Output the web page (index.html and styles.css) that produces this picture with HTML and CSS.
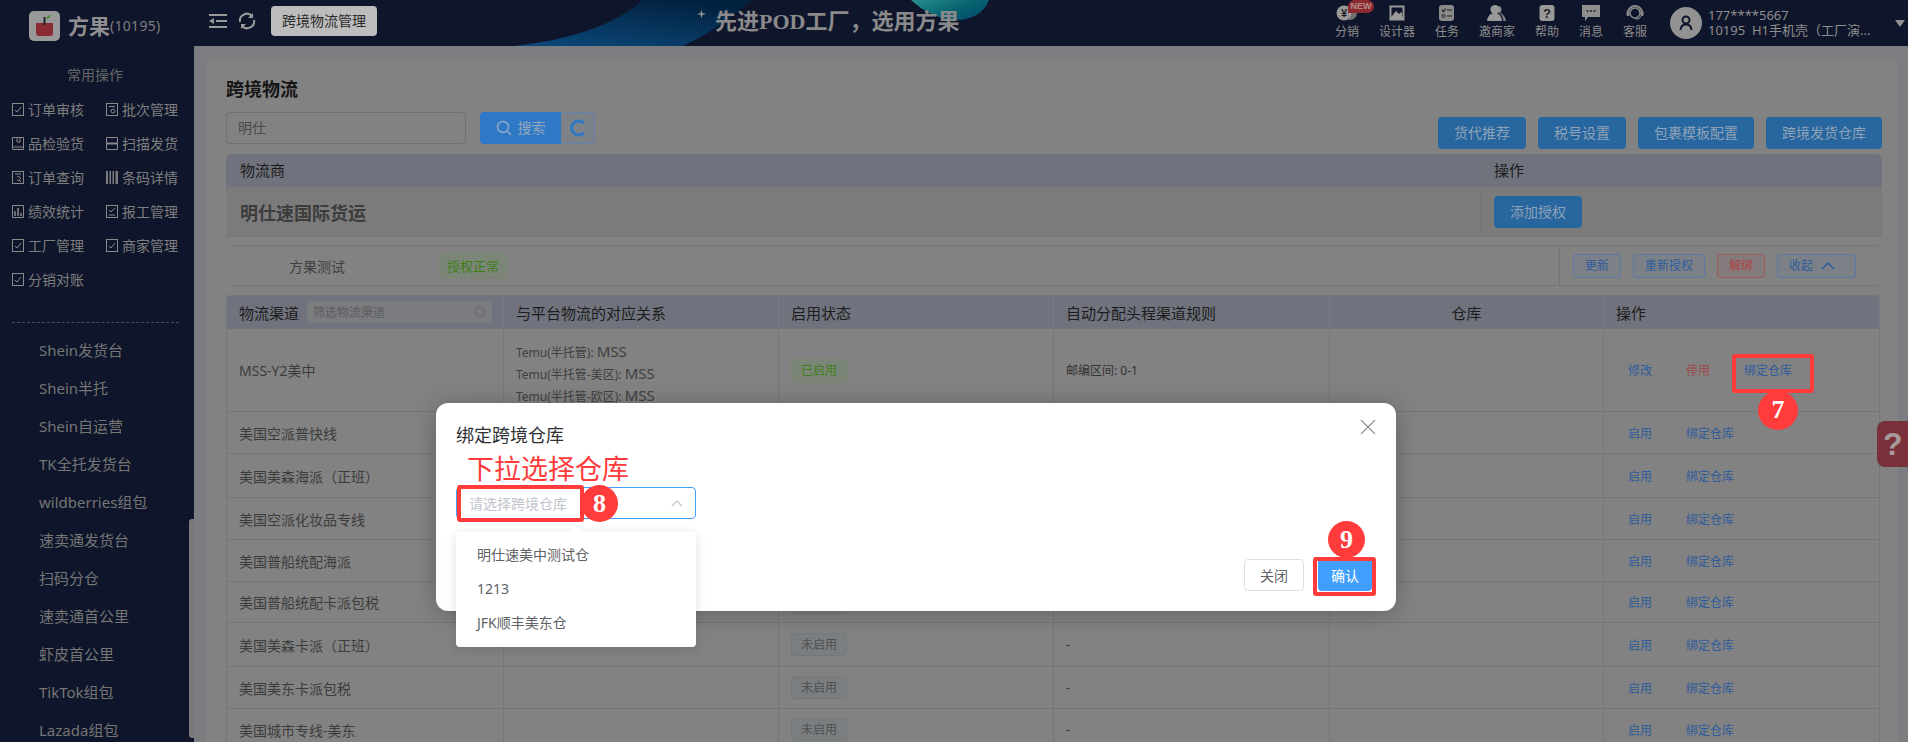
FILE: index.html
```html
<!DOCTYPE html>
<html lang="zh-CN">
<head>
  <meta charset="UTF-8" />
  <title>跨境物流</title>
  <meta name="viewport" content="width=device-width, initial-scale=1.0" />
  <link rel="stylesheet" href="styles.css">
</head>
<body>
  <header class="topbar">
    <svg class="banner" viewBox="0 0 500 46" aria-hidden="true">
      <defs>
        <linearGradient id="wave" x1="0" y1="1" x2="0.7" y2="0">
          <stop offset="0" stop-color="#0b4a7c" />
          <stop offset="1" stop-color="#02213f" />
        </linearGradient>
        <linearGradient id="blob" x1="0" y1="0" x2="1" y2="0.6">
          <stop offset="0" stop-color="#2a8d8f" />
          <stop offset="0.6" stop-color="#07656f" />
          <stop offset="1" stop-color="#03506f" />
        </linearGradient>
      </defs>
      <path d="M14 46 C70 40 118 24 142 0 L252 0 C226 22 205 36 183 46 Z" fill="url(#wave)" />
      <path d="M411 0 L489 0 C484 14 470 20 457 20 C440 20 424 12 411 0 Z" fill="url(#blob)" />
    </svg>
    <svg class="star" viewBox="0 0 10 10" aria-hidden="true"><path d="M5 0 L6 4 L10 5 L6 6 L5 10 L4 6 L0 5 L4 4 Z" fill="#8f8f8f" /></svg>
    <div class="slogan">先进POD工厂&#xFF0C;选用方果</div>

    <div class="brand">
      <svg class="brand-logo" viewBox="0 0 31 30" aria-hidden="true">
        <rect width="31" height="30" rx="5" fill="#999" />
        <path d="M7 12 H24 V22 Q24 25 21 25 H10 Q7 25 7 22 Z" fill="#8a2b33" />
        <rect x="14.5" y="6" width="2" height="8" fill="#222" />
        <path d="M17 8 Q18 4 22 4 Q21 8 17 8 Z" fill="#4d8a3a" />
      </svg>
      <span class="brand-name">方果</span><span class="brand-id">(10195)</span>
    </div>
    <svg class="tool-ic" viewBox="0 0 18 16" aria-hidden="true">
      <path d="M0 1 H18 V3 H0 Z M7 7 H18 V9 H7 Z M0 13 H18 V15 H0 Z M0 8 L5 5 V11 Z" fill="#9a9a9a" />
    </svg>
    <svg class="tool-ic refresh" viewBox="0 0 18 18" aria-hidden="true">
      <path d="M2 10 A7 7 0 0 1 14 4 M16 8 A7 7 0 0 1 4 14" fill="none" stroke="#9a9a9a" stroke-width="2" />
      <path d="M15 1 V6 H10 Z M3 17 V12 H8 Z" fill="#9a9a9a" />
    </svg>
    <span class="crumb">跨境物流管理</span>

    <nav class="top-nav">
      <a class="top-item">
        <svg viewBox="0 0 24 16" aria-hidden="true">
          <circle cx="15" cy="8" r="7" fill="#6f6f6f" />
          <circle cx="9" cy="8" r="7.5" fill="#999" />
          <text x="9" y="12" class="yen">¥</text>
        </svg>
        <span>分销</span>
        <b class="badge">NEW</b>
      </a>
      <a class="top-item">
        <svg viewBox="0 0 16 16" aria-hidden="true">
          <rect x="0.5" y="0.5" width="15" height="15" fill="#999" />
          <rect x="2.5" y="2.5" width="11" height="9" fill="#0f152b" />
          <path d="M3 11 L7 6 L10 9 L12 7 L13 8.5 V13 H3 Z" fill="#999" />
        </svg>
        <span>设计器</span>
      </a>
      <a class="top-item">
        <svg viewBox="0 0 16 16" aria-hidden="true">
          <rect width="15" height="16" rx="3" fill="#8a8a8a" />
          <path d="M3 5 L4.500 6.500 L6.500 3.500 M8 5 H13 M8 11 H13" fill="none" stroke="#222" stroke-width="1.200" />
          <circle cx="4.500" cy="11" r="1.500" fill="none" stroke="#222" />
        </svg>
        <span>任务</span>
      </a>
      <a class="top-item">
        <svg viewBox="0 0 20 16" aria-hidden="true">
          <circle cx="8" cy="4.500" r="4.500" fill="#999" />
          <path d="M0 16 Q1 8 8 8 Q14 8 15 16 Z" fill="#999" />
          <path d="M12 0.500 A4.500 4.500 0 0 1 13 8 Q18 10 19 16 H16.500 Q16 10 12 8 Z" fill="#8a8a8a" />
        </svg>
        <span>邀商家</span>
      </a>
      <a class="top-item">
        <svg viewBox="0 0 16 16" aria-hidden="true">
          <rect x="0.500" width="15" height="16" rx="3" fill="#999" />
          <text x="8" y="13" class="qmark">?</text>
        </svg>
        <span>帮助</span>
      </a>
      <a class="top-item">
        <svg viewBox="0 0 18 16" aria-hidden="true">
          <path d="M0 0 H18 V12 H6 L3 16 V12 H0 Z" fill="#8f8f8f" />
          <circle cx="5.500" cy="6" r="1" fill="#222" />
          <circle cx="9" cy="6" r="1" fill="#222" />
          <circle cx="12.500" cy="6" r="1" fill="#222" />
        </svg>
        <span>消息</span>
      </a>
      <a class="top-item">
        <svg viewBox="0 0 18 16" aria-hidden="true">
          <path d="M2 8 A7 7 0 0 1 16 8" fill="none" stroke="#8a8a8a" stroke-width="2" />
          <circle cx="9" cy="8" r="5" fill="none" stroke="#8a8a8a" stroke-width="1.500" />
          <rect x="0.500" y="6" width="3" height="5" rx="1" fill="#8a8a8a" />
          <rect x="14.500" y="6" width="3" height="5" rx="1" fill="#8a8a8a" />
          <path d="M9 14 H13 L15 11" fill="none" stroke="#8a8a8a" />
        </svg>
        <span>客服</span>
      </a>
    </nav>
    <div class="avatar">
      <svg viewBox="0 0 14 16" aria-hidden="true">
        <circle cx="7" cy="5" r="3.500" fill="none" stroke="#0f152b" stroke-width="2" />
        <path d="M1.500 15 Q2 9.500 7 9.500 Q12 9.500 12.500 15" fill="none" stroke="#0f152b" stroke-width="2" />
      </svg>
    </div>
    <div class="account">
      <div>177****5667</div>
      <div>10195&nbsp; H1手机壳&#xFF08;工厂演...</div>
    </div>
    <i class="caret"></i>
  </header>

  <div class="layout">
    <aside class="sidebar">
      <div class="side-title">常用操作</div>
      <ul class="quick-ops">
        <li><svg viewBox="0 0 12 13"><rect x="0.500" y="0.500" width="11" height="12" fill="none" stroke="#8a8a8a" /><path d="M3 7 L5 9 L9 4" fill="none" stroke="#8a8a8a" /></svg>订单审核</li>
        <li><svg viewBox="0 0 12 13"><rect x="0.500" y="0.500" width="11" height="12" fill="none" stroke="#8a8a8a" /><path d="M3 3.500 H9" stroke="#8a8a8a" /><circle cx="7" cy="8" r="2" fill="none" stroke="#8a8a8a" /></svg>批次管理</li>
        <li><svg viewBox="0 0 12 13"><path d="M0.500 12.500 V0.500 H11.500 V12.500 Z M0.500 10 H11.500" fill="none" stroke="#8a8a8a" /><path d="M5 1 V5 H8 V1" fill="none" stroke="#8a8a8a" /></svg>品检验货</li>
        <li><svg viewBox="0 0 12 13"><path d="M0.500 0.500 H11.500 V12.500 H0.500 Z" fill="none" stroke="#8a8a8a" /><path d="M0 6.500 H12" stroke="#8a8a8a" stroke-width="2" /></svg>扫描发货</li>
        <li><svg viewBox="0 0 12 13"><rect x="0.500" y="0.500" width="11" height="12" fill="none" stroke="#8a8a8a" /><path d="M3 3 H9 M5 6 A2 2 0 1 1 5 9 M7 9 L9 11" fill="none" stroke="#8a8a8a" /></svg>订单查询</li>
        <li><svg viewBox="0 0 12 13"><path d="M0 0 H2 V13 H0 Z M3.500 0 H5 V13 H3.500 Z M6.500 0 H8 V13 H6.500 Z M9.500 0 H12 V13 H9.500 Z" fill="#7c7c7c" /></svg>条码详情</li>
        <li><svg viewBox="0 0 12 13"><path d="M0.500 0.500 H11.500 V12.500 H0.500 Z" fill="none" stroke="#8a8a8a" /><path d="M3 6 V11 M6 3 V11 M9 8 V11" stroke="#8a8a8a" stroke-width="1.500" /></svg>绩效统计</li>
        <li><svg viewBox="0 0 12 13"><rect x="0.500" y="0.500" width="11" height="12" fill="none" stroke="#8a8a8a" /><path d="M3 5 L5 7 L9 3 M3 10 H9" fill="none" stroke="#8a8a8a" /></svg>报工管理</li>
        <li><svg viewBox="0 0 12 13"><rect x="0.500" y="0.500" width="11" height="12" fill="none" stroke="#8a8a8a" /><path d="M3 7 L5 9 L9 4" fill="none" stroke="#8a8a8a" /></svg>工厂管理</li>
        <li><svg viewBox="0 0 12 13"><rect x="0.500" y="0.500" width="11" height="12" fill="none" stroke="#8a8a8a" /><path d="M3 7 L5 9 L9 4" fill="none" stroke="#8a8a8a" /></svg>商家管理</li>
        <li><svg viewBox="0 0 12 13"><rect x="0.500" y="0.500" width="11" height="12" fill="none" stroke="#8a8a8a" /><path d="M3 7 L5 9 L9 4" fill="none" stroke="#8a8a8a" /></svg>分销对账</li>
      </ul>
      <div class="side-line"></div>
      <ul class="side-nav">
        <li>Shein发货台</li>
        <li>Shein半托</li>
        <li>Shein自运营</li>
        <li>TK全托发货台</li>
        <li>wildberries组包</li>
        <li>速卖通发货台</li>
        <li>扫码分仓</li>
        <li>速卖通首公里</li>
        <li>虾皮首公里</li>
        <li>TikTok组包</li>
        <li>Lazada组包</li>
      </ul>
      <div class="side-scroll"></div>
    </aside>

    <main class="main">
      <section class="card">
        <h1 class="page-title">跨境物流</h1>
        <div class="toolbar">
          <div class="search">
            <div class="search-input">明仕</div>
            <button class="btn btn-search">
              <svg viewBox="0 0 16 16" aria-hidden="true"><circle cx="7" cy="7" r="5.500" fill="none" stroke="#8fa9c4" stroke-width="1.500" /><path d="M11 11 L15 15" stroke="#8fa9c4" stroke-width="1.500" /></svg>
              搜索
            </button>
            <button class="btn-reload">
              <svg viewBox="0 0 16 18" aria-hidden="true"><path d="M14 4.500 A7 7 0 1 0 14 13.500" fill="none" stroke="#2f78c5" stroke-width="3" /></svg>
            </button>
          </div>
          <div class="top-actions">
            <button class="btn">货代推荐</button>
            <button class="btn">税号设置</button>
            <button class="btn">包裹模板配置</button>
            <button class="btn">跨境发货仓库</button>
          </div>
        </div>

        <div class="vendor-table">
          <div class="vendor-head">
            <div class="vendor-col">物流商</div>
            <div class="vendor-op">操作</div>
          </div>
          <div class="vendor-row">
            <div class="vendor-col vendor-name">明仕速国际货运</div>
            <div class="vendor-op"><button class="btn">添加授权</button></div>
          </div>
        </div>

        <div class="auth-row">
          <div class="auth-name">方果测试</div>
          <span class="tag tag-green">授权正常</span>
          <div class="auth-actions">
            <button class="btn-line">更新</button>
            <button class="btn-line">重新授权</button>
            <button class="btn-line btn-danger">解绑</button>
            <button class="btn-line btn-fold">收起
              <svg viewBox="0 0 14 8" aria-hidden="true"><path d="M1 7 L7 1 L13 7" fill="none" stroke="#2f5c9c" stroke-width="1.500" /></svg>
            </button>
          </div>
        </div>

        <div class="channel-table">
          <div class="ch-row ch-head">
            <div class="ch-filter-cell">物流渠道
              <div class="ch-filter">筛选物流渠道
                <svg viewBox="0 0 12 12" aria-hidden="true"><circle cx="5.500" cy="5.500" r="4.500" fill="none" stroke="#666" /><path d="M9 9 L11 11" stroke="#666" /></svg>
              </div>
            </div>
            <div>与平台物流的对应关系</div>
            <div>启用状态</div>
            <div>自动分配头程渠道规则</div>
            <div class="ch-center">仓库</div>
            <div>操作</div>
          </div>

          <div class="ch-row ch-first">
            <div>MSS-Y2美中</div>
            <div class="ch-map">
              <p>Temu(半托管): <em>MSS</em></p>
              <p>Temu(半托管-美区): <em>MSS</em></p>
              <p>Temu(半托管-欧区): <em>MSS</em></p>
            </div>
            <div><span class="tag tag-green">已启用</span></div>
            <div class="ch-rule">邮编区间: 0-1</div>
            <div></div>
            <div class="ch-ops"><a>修改</a><a class="link-red">停用</a><a>绑定仓库</a></div>
          </div>
          <div class="ch-row">
            <div>美国空派普快线</div><div></div><div><span class="tag">未启用</span></div><div class="ch-rule">-</div><div></div>
            <div class="ch-ops"><a>启用</a><a>绑定仓库</a></div>
          </div>
          <div class="ch-row ch-tall">
            <div>美国美森海派&#xFF08;正班&#xFF09;</div><div></div><div><span class="tag">未启用</span></div><div class="ch-rule">-</div><div></div>
            <div class="ch-ops"><a>启用</a><a>绑定仓库</a></div>
          </div>
          <div class="ch-row">
            <div>美国空派化妆品专线</div><div></div><div><span class="tag">未启用</span></div><div class="ch-rule">-</div><div></div>
            <div class="ch-ops"><a>启用</a><a>绑定仓库</a></div>
          </div>
          <div class="ch-row">
            <div>美国普船统配海派</div><div></div><div><span class="tag">未启用</span></div><div class="ch-rule">-</div><div></div>
            <div class="ch-ops"><a>启用</a><a>绑定仓库</a></div>
          </div>
          <div class="ch-row ch-short">
            <div>美国普船统配卡派包税</div><div></div><div><span class="tag">未启用</span></div><div class="ch-rule">-</div><div></div>
            <div class="ch-ops"><a>启用</a><a>绑定仓库</a></div>
          </div>
          <div class="ch-row ch-tall">
            <div>美国美森卡派&#xFF08;正班&#xFF09;</div><div></div><div><span class="tag">未启用</span></div><div class="ch-rule">-</div><div></div>
            <div class="ch-ops"><a>启用</a><a>绑定仓库</a></div>
          </div>
          <div class="ch-row">
            <div>美国美东卡派包税</div><div></div><div><span class="tag">未启用</span></div><div class="ch-rule">-</div><div></div>
            <div class="ch-ops"><a>启用</a><a>绑定仓库</a></div>
          </div>
          <div class="ch-row">
            <div>美国城市专线-美东</div><div></div><div><span class="tag">未启用</span></div><div class="ch-rule">-</div><div></div>
            <div class="ch-ops"><a>启用</a><a>绑定仓库</a></div>
          </div>
        </div>
      </section>
    </main>
  </div>

  <div class="help-float">?</div>

  <div class="dialog">
    <div class="dialog-head">
      <span>绑定跨境仓库</span>
      <svg class="dialog-close" viewBox="0 0 16 16" aria-hidden="true"><path d="M1 1 L15 15 M15 1 L1 15" stroke="#909399" stroke-width="1.200" /></svg>
    </div>
    <div class="select">
      <span>请选择跨境仓库</span>
      <svg viewBox="0 0 12 7" aria-hidden="true"><path d="M1 6 L6 1 L11 6" fill="none" stroke="#c0c4cc" stroke-width="1.200" /></svg>
    </div>
    <div class="dialog-foot">
      <button class="btn-plain">关闭</button>
      <button class="btn-primary">确认</button>
    </div>
    <ul class="dropdown">
      <li>明仕速美中测试仓</li>
      <li>1213</li>
      <li>JFK顺丰美东仓</li>
    </ul>
  </div>

  <!-- tutorial marks drawn over the screenshot -->
  <div class="note-text">下拉选择仓库</div>
  <div class="mark mark-bind"></div>
  <div class="num num-7">7</div>
  <div class="mark mark-select"></div>
  <div class="num num-8">8</div>
  <div class="mark mark-ok"></div>
  <div class="num num-9">9</div>
</body>
</html>
```

FILE: styles.css
```css
* {
  box-sizing: border-box;
}

html, body {
  margin: 0;
  height: 742px;
  overflow: hidden;
}

body {
  background-color: #0f152b;
  color: #3a3a3a;
  font-family: "Noto Sans", "Noto Sans CJK SC", sans-serif;
  font-size: 14px;
  position: relative;
}

ul {
  list-style: none;
  margin: 0;
  padding: 0;
}

button {
  font-family: inherit;
  cursor: pointer;
}

/* top bar */
.topbar {
  height: 46px;
  background-color: #0f152b;
  display: flex;
  align-items: center;
  position: relative;
  color: #999;
}

.banner {
  position: absolute;
  left: 500px;
  top: 0;
  width: 500px;
  height: 46px;
}

.star {
  position: absolute;
  left: 697px;
  top: 9px;
  width: 9px;
  height: 10px;
}

.slogan {
  position: absolute;
  left: 715px;
  top: 7px;
  font-family: "Liberation Serif", "Noto Sans CJK SC", serif;
  font-size: 22px;
  line-height: 30px;
  font-weight: 700;
  color: #8a8a8a;
}

.brand {
  width: 209px;
  padding-left: 29px;
  margin-top: 6px;
  display: flex;
  align-items: center;
  position: relative;
}

.brand-logo {
  width: 31px;
  height: 30px;
  margin-right: 8px;
}

.brand-name {
  font-size: 21px;
  font-weight: 700;
  color: #8f8f8f;
  line-height: 30px;
}

.brand-id {
  font-size: 14px;
  color: #7f7f7f;
  line-height: 30px;
  letter-spacing: 0.3px;
}

.tool-ic {
  width: 18px;
  height: 16px;
  margin-top: -4px;
  position: relative;
}

.refresh {
  margin-left: 11px;
  height: 18px;
}

.crumb {
  margin-left: 15px;
  margin-top: -4px;
  height: 30px;
  width: 106px;
  background-color: #bcbcbc;
  color: #2a2a2a;
  border-radius: 4px;
  font-size: 14px;
  line-height: 30px;
  text-align: center;
  position: relative;
}

.top-nav {
  margin-left: auto;
  margin-top: -2px;
  display: flex;
  gap: 20px;
  position: relative;
}

.top-item {
  display: flex;
  flex-direction: column;
  align-items: center;
  position: relative;
  font-size: 12px;
  line-height: 14px;
  color: #8c8c8c;
}

.top-item svg {
  height: 16px;
  margin-bottom: 4px;
  width: 24px;
}

.yen {
  font-family: "Liberation Sans", sans-serif;
  font-size: 11px;
  font-weight: 700;
  text-anchor: middle;
  fill: #222;
}

.qmark {
  font-family: "Liberation Sans", sans-serif;
  font-size: 13px;
  font-weight: 700;
  text-anchor: middle;
  fill: #222;
}

.badge {
  position: absolute;
  left: 13px;
  top: -5px;
  width: 26px;
  height: 13px;
  border-radius: 7px 7px 7px 0;
  background-color: #8d2a30;
  color: #b58a8c;
  font-family: "Liberation Sans", sans-serif;
  font-size: 9px;
  line-height: 13px;
  text-align: center;
}

.avatar {
  margin-left: 23px;
  width: 32px;
  height: 32px;
  border-radius: 50%;
  background-color: #929292;
  display: flex;
  align-items: center;
  justify-content: center;
  position: relative;
}

.avatar svg {
  width: 14px;
  height: 16px;
}

.account {
  margin-left: 6px;
  width: 170px;
  font-size: 13px;
  line-height: 15px;
  color: #8f8f8f;
  white-space: nowrap;
  position: relative;
}

.caret {
  margin-left: 17px;
  margin-right: 3px;
  width: 0;
  height: 0;
  border-left: 5px solid transparent;
  border-right: 5px solid transparent;
  border-top: 7px solid #8f8f8f;
  position: relative;
}

/* page body */
.layout {
  display: flex;
  height: 696px;
}

.sidebar {
  width: 194px;
  flex: none;
  background-color: #0f152b;
  color: #7e7e7e;
  position: relative;
  overflow: hidden;
}

.side-title {
  margin-top: 19px;
  text-align: center;
  line-height: 20px;
  padding-right: 4px;
  color: #666;
  font-size: 14px;
}

.quick-ops {
  margin-top: 7px;
  padding-left: 12px;
  display: grid;
  grid-template-columns: repeat(2, 94px);
  grid-auto-rows: 34px;
}

.quick-ops li {
  display: flex;
  align-items: center;
  gap: 4px;
  white-space: nowrap;
}

.quick-ops svg {
  width: 12px;
  height: 13px;
  flex: none;
}

.side-line {
  margin: 26px 15px 0 12px;
  border-top: 1px dashed #4a4d5a;
}

.side-nav {
  margin-top: 8px;
  padding-left: 39px;
}

.side-nav li {
  height: 38px;
  line-height: 38px;
  font-size: 15px;
  color: #757575;
  white-space: nowrap;
}

.side-scroll {
  position: absolute;
  right: 0;
  top: 473px;
  width: 5px;
  height: 219px;
  border-radius: 3px 0 0 3px;
  background-color: #7a7a7a;
}

.main {
  flex: 1;
  min-width: 0;
  background-color: #7b7d80;
  padding: 13px 10px 0 12px;
}

.card {
  height: 700px;
  background-color: #828282;
  border-radius: 10px 10px 0 0;
  padding: 18px 16px 0 20px;
}

.page-title {
  margin: 0 0 11px;
  font-size: 18px;
  line-height: 24px;
  font-weight: 700;
  color: #141414;
}

.toolbar {
  display: flex;
  justify-content: space-between;
  height: 37px;
}

.search {
  display: flex;
  height: 32px;
}

.search-input {
  width: 240px;
  height: 32px;
  border: 1px solid #707070;
  border-radius: 4px;
  padding-left: 11px;
  line-height: 30px;
  color: #4a4a4a;
  margin-right: 14px;
}

.btn {
  height: 32px;
  padding: 0 16px;
  background-color: #28669f;
  color: #8fa3b8;
  border: none;
  border-radius: 4px;
  font-size: 14px;
  line-height: 32px;
  white-space: nowrap;
}

.btn-search {
  width: 81px;
  padding: 0;
  background-color: #2f78c5;
  border-radius: 4px 0 0 4px;
  display: flex;
  align-items: center;
  justify-content: center;
  gap: 6px;
  color: #93a7bd;
}

.btn-search svg {
  width: 16px;
  height: 16px;
}

.btn-reload {
  width: 34px;
  height: 32px;
  padding: 0;
  background-color: #7d8288;
  border: 1px solid #5f83ab;
  border-left: none;
  border-radius: 0 4px 4px 0;
  display: flex;
  align-items: center;
  justify-content: center;
}

.btn-reload svg {
  width: 16px;
  height: 18px;
}

.top-actions {
  display: flex;
  gap: 12px;
  margin-top: 5px;
}

.vendor-table {
  margin-top: 5px;
  border-radius: 6px 6px 0 0;
  overflow: hidden;
}

.vendor-head,
.vendor-row {
  display: flex;
}

.vendor-head {
  height: 33px;
  background-color: #70737d;
  color: #1c1c1c;
  font-size: 15px;
  line-height: 33px;
}

.vendor-row {
  height: 50px;
  background-color: #7b7b7b;
  border-bottom: 1px solid #777;
  align-items: center;
}

.vendor-col {
  width: 1254px;
  padding-left: 14px;
}

.vendor-op {
  flex: 1;
  padding-left: 13px;
  border-left: 1px solid #757575;
  height: 100%;
  display: flex;
  align-items: center;
}

.vendor-name {
  font-size: 18px;
  font-weight: 700;
  color: #3c3c3c;
}

.auth-row {
  margin: 8px 0 0 4px;
  height: 41px;
  border-top: 1px solid #757575;
  border-bottom: 1px solid #757575;
  display: flex;
  align-items: center;
  width: 1648px;
}

.auth-name {
  margin-left: 59px;
  width: 150px;
  color: #3f3f3f;
}

.tag {
  display: inline-block;
  width: 56px;
  height: 23px;
  line-height: 21px;
  padding: 0;
  border: 1px solid #757878;
  border-radius: 4px;
  background-color: #7b7e80;
  color: #4f4f4f;
  font-size: 12px;
  text-align: center;
}

.tag-green {
  background-color: #7c8678;
  border-color: #76866e;
  color: #3f7f18;
}

.auth-row .tag {
  width: 68px;
  height: 24px;
  line-height: 22px;
  font-size: 13px;
}

.auth-actions {
  margin-left: auto;
  margin-right: 22px;
  height: 100%;
  display: flex;
  align-items: center;
  gap: 12px;
  border-left: 1px solid #757575;
  padding-left: 13px;
}

.btn-line {
  height: 24px;
  min-width: 48px;
  padding: 0 11px;
  background-color: #7c8188;
  border: 1px solid #5a7aa3;
  border-radius: 3px;
  color: #2f5c9c;
  font-size: 12px;
  line-height: 22px;
  white-space: nowrap;
}

.btn-danger {
  background-color: #847b7c;
  border-color: #a05a5a;
  color: #b04343;
}

.btn-fold {
  display: flex;
  align-items: center;
  width: 79px;
  gap: 8px;
}

.btn-fold svg {
  width: 14px;
  height: 8px;
}

.channel-table {
  margin-top: 9px;
  width: 1654px;
}

.ch-row {
  display: grid;
  grid-template-columns: 278px 275px 275px 276px 274px 276px;
  height: 42px;
  border-bottom: 1px solid #767676;
  color: #3c3c3c;
}

.ch-row > div {
  display: flex;
  align-items: center;
  padding-left: 12px;
  border-right: 1px solid #767676;
  white-space: nowrap;
}

.ch-row > div:first-child {
  border-left: 1px solid #777;
}

.ch-tall {
  height: 44px;
}

.ch-short {
  height: 41px;
}

.ch-head {
  height: 34px;
  background-color: #70737d;
  border-radius: 6px 6px 0 0;
  color: #1c1c1c;
  font-size: 15px;
  border-bottom: none;
}

.ch-head > div {
  border-right-color: #777a84;
}

.ch-filter-cell {
  gap: 8px;
}

.ch-filter {
  width: 185px;
  height: 22px;
  padding: 0 6px;
  background-color: #7a7c80;
  border-radius: 3px;
  font-size: 12px;
  color: #5c5c5c;
  display: flex;
  align-items: center;
  justify-content: space-between;
}

.ch-filter svg {
  width: 12px;
  height: 12px;
}

.ch-row > .ch-center {
  justify-content: center;
  padding-left: 0;
}

.ch-first {
  height: 83px;
}

.ch-row > .ch-map {
  display: block;
  padding-top: 12px;
  font-size: 12px;
  color: #404040;
}

.ch-map p {
  margin: 0;
  line-height: 20px;
}

.ch-map em {
  font-style: normal;
  font-size: 15px;
}

.ch-rule {
  font-size: 12px;
  color: #333;
}

.ch-row > .ch-ops {
  padding-left: 24px;
  font-size: 12px;
  color: #2f5c9c;
}

.ch-ops a {
  width: 58px;
  flex: none;
}

.ch-ops .link-red {
  color: #a04848;
}

.help-float {
  position: absolute;
  left: 1877px;
  top: 421px;
  width: 31px;
  height: 46px;
  background-color: #7a3038;
  border-radius: 8px 0 0 8px;
  color: #a89a9c;
  font-family: "Liberation Sans", sans-serif;
  font-size: 32px;
  font-weight: 700;
  line-height: 46px;
  padding-left: 6px;
}

/* bind warehouse dialog */
.dialog {
  position: absolute;
  left: 436px;
  top: 403px;
  width: 960px;
  height: 208px;
  background-color: #fff;
  border-radius: 12px;
  box-shadow: 0 2px 22px rgba(0, 0, 0, 0.25);
  padding: 20px;
}

.dialog-head {
  display: flex;
  justify-content: space-between;
  font-size: 18px;
  line-height: 24px;
  color: #303133;
}

.dialog-close {
  width: 16px;
  height: 16px;
  margin: -4px 0 0;
}

.select {
  margin-top: 40px;
  width: 240px;
  height: 32px;
  border: 1px solid #409eff;
  border-radius: 4px;
  padding: 0 12px;
  display: flex;
  align-items: center;
  justify-content: space-between;
  color: #c0c4cc;
  font-size: 14px;
}

.select svg {
  width: 12px;
  height: 7px;
}

.dialog-foot {
  position: absolute;
  right: 24px;
  bottom: 20px;
  display: flex;
  gap: 14px;
}

.btn-plain {
  width: 60px;
  height: 32px;
  background-color: #fff;
  border: 1px solid #dcdfe6;
  border-radius: 4px;
  color: #606266;
  font-size: 14px;
}

.btn-primary {
  width: 54px;
  height: 32px;
  background-color: #409eff;
  border: none;
  border-radius: 4px;
  color: #fff;
  font-size: 14px;
}

.dropdown {
  position: absolute;
  left: 20px;
  top: 129px;
  width: 240px;
  height: 115px;
  padding: 6px 0;
  background-color: #fff;
  border-radius: 4px;
  box-shadow: 0 2px 12px rgba(0, 0, 0, 0.12);
}

.dropdown::before {
  content: "";
  position: absolute;
  left: 114px;
  top: -6px;
  border-left: 6px solid transparent;
  border-right: 6px solid transparent;
  border-bottom: 6px solid #fff;
}

.dropdown li {
  height: 34px;
  line-height: 34px;
  padding-left: 21px;
  color: #606266;
}

/* red tutorial marks */
.note-text {
  position: absolute;
  left: 467px;
  top: 451px;
  font-size: 27px;
  line-height: 36px;
  color: #ff3b3b;
  white-space: nowrap;
}

.mark {
  position: absolute;
  border: 4px solid #ff3b3b;
  border-radius: 3px;
}

.mark-bind {
  left: 1732px;
  top: 354px;
  width: 82px;
  height: 39px;
}

.mark-select {
  left: 457px;
  top: 485px;
  width: 127px;
  height: 37px;
}

.mark-ok {
  left: 1313px;
  top: 557px;
  width: 63px;
  height: 39px;
}

.num {
  position: absolute;
  width: 37px;
  height: 37px;
  border-radius: 50%;
  background-color: #ff3b3b;
  color: #fff;
  font-family: "Liberation Serif", serif;
  font-size: 26px;
  font-weight: 700;
  line-height: 37px;
  text-align: center;
}

.num-7 {
  left: 1758px;
  top: 391px;
  width: 40px;
  height: 39px;
}

.num-8 {
  left: 581px;
  top: 485px;
}

.num-9 {
  left: 1328px;
  top: 521px;
}
```
